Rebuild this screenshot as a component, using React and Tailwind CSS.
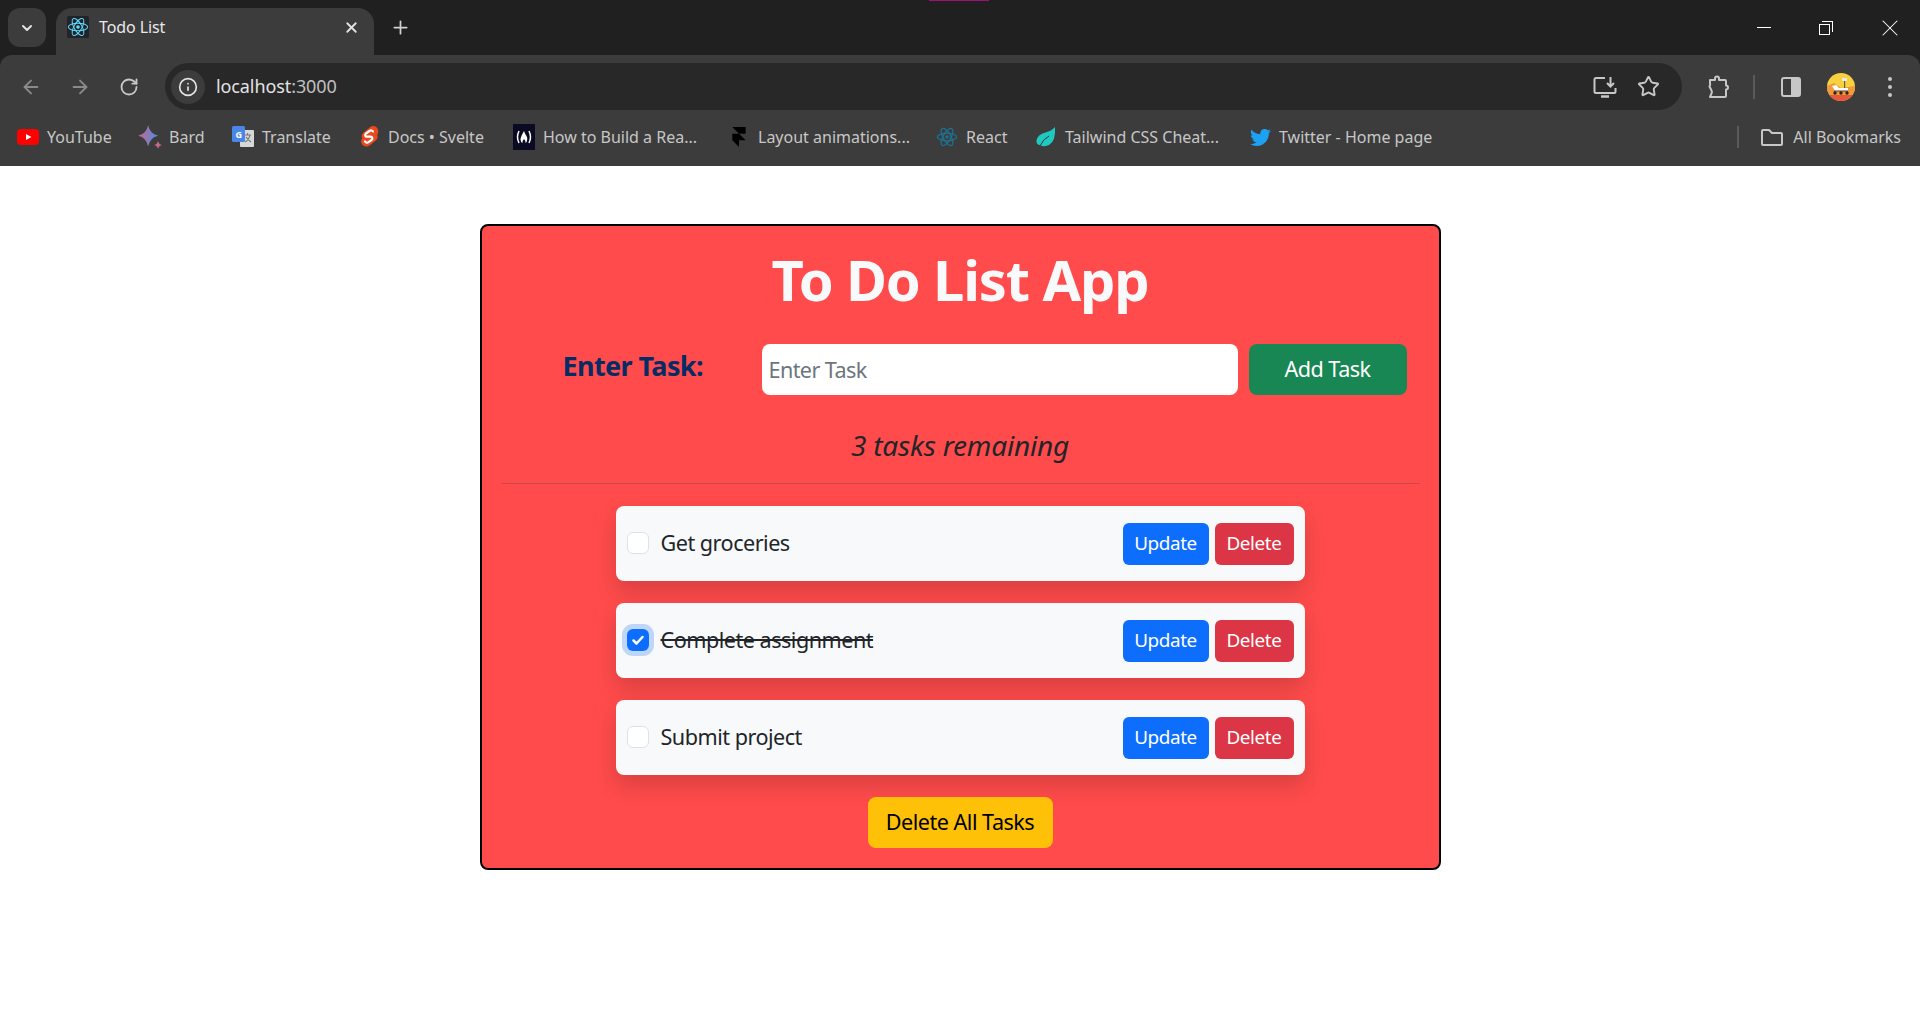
import React from "react";
import { ArrowLeft, ArrowRight, ChevronDown, Info, Plus, RotateCw, Star, X } from "lucide-react";
import { FaTwitter } from "react-icons/fa";
import { SiFramer } from "react-icons/si";

const ReactLogo = ({ size = 22, color = "#61dafb", bg = "none", sw = 1.1 }) => (
  <svg width={size} height={size} viewBox="0 0 24 24" fill="none" stroke={color} strokeWidth={sw}>
    <rect width="24" height="24" rx="2" fill={bg} stroke="none" />
    <ellipse cx="12" cy="12" rx="10.5" ry="4.2" />
    <ellipse cx="12" cy="12" rx="10.5" ry="4.2" transform="rotate(60 12 12)" />
    <ellipse cx="12" cy="12" rx="10.5" ry="4.2" transform="rotate(120 12 12)" />
    <circle cx="12" cy="12" r="2" fill={color} stroke="none" />
  </svg>
);

const YoutubeIcon = () => (
  <svg width="22" height="22" viewBox="0 0 22 22">
    <rect x="0" y="3" width="22" height="16" rx="4" fill="#f00" />
    <path d="M9 8l5.5 3L9 14z" fill="#fff" />
  </svg>
);

const BardIcon = () => (
  <svg width="26" height="26" viewBox="1 0 21 21" className="shrink-0">
    <defs>
      <linearGradient id="bard" x1="0" y1="0" x2="1" y2="0">
        <stop offset="0" stopColor="#c9678f" />
        <stop offset="1" stopColor="#4b8fe0" />
      </linearGradient>
    </defs>
    <path d="M10 1q1.5 7 8 8.500q-6.500 1.500-8 8.500q-1.500-7-8-8.500q6.500-1.500 8-8.500z" fill="url(#bard)" />
    <path d="M18 14q.6 2.400 3 3q-2.400.6-3 3q-.6-2.400-3-3q2.400-.6 3-3z" fill="#c9678f" />
  </svg>
);

const TranslateIcon = () => (
  <svg width="22" height="24" viewBox="0 0 22 24">
    <rect x="8" y="5" width="14" height="17" rx="1" fill="#d8d8d8" />
    <path d="M12 10h7M15.500 8v2M13 17q4-2 5-7M14 12q2 3 5 5" stroke="#777" strokeWidth="1.2" fill="none" />
    <rect x="0" y="1" width="13" height="16" rx="1.500" fill="#4a86e8" />
    <text x="3.500" y="12.500" fontSize="9" fontWeight="700" fill="#fff" fontFamily="Noto Sans, sans-serif">G</text>
  </svg>
);

const SvelteIcon = () => (
  <svg width="20" height="24" viewBox="0 0 20 24">
    <path d="M12 1.500c2-1 5-.5 6.500 2 1.300 2.200 1 4.600-.3 6.300.8 1.800.5 4.200-1.200 5.400l-6 5c-2.500 2-6 1.800-7.800-.6-1.500-2-1.300-4.500 0-6.300-.9-1.800-.6-4 1-5.600z" fill="#e8491f" />
    <path d="M14 6.500c-1-1.200-2.500-1.300-3.500-.5L7 8.500c-1.500 1.200-.8 3.200 1 3.200h3.500c2 0 2.600 2.200 1 3.300l-3 2.200c-1.200.8-2.700.5-3.500-.7" fill="none" stroke="#fff" strokeWidth="2.200" strokeLinecap="round" />
  </svg>
);

const FccIcon = () => (
  <svg width="22" height="26" viewBox="0 0 22 26">
    <rect width="22" height="26" fill="#0a0a23" />
    <path d="M6 7q-3 6 0 12M16 7q3 6 0 12" stroke="#fff" strokeWidth="1.500" fill="none" />
    <path d="M11 7q1 3 2.500 5t.5 5q-.5 1.500-1.500 2q.5-2-1.500-4q-2 2-1.500 4q-2-1-2-3.500t3.500-8.500z" fill="#fff" />
  </svg>
);

const LeafIcon = () => (
  <svg width="22" height="24" viewBox="0 0 22 24">
    <path d="M20 2q1 14-6 18q-5 2.500-11-.500q-2-1-1.500-4q1-6 9-8q6-1.500 9.500-5.500z" fill="#1fc8c0" />
    <path d="M5 21q3-7 9-10" stroke="#2a3a3a" strokeWidth="1" fill="none" />
  </svg>
);

const InstallIcon = () => (
  <svg width="24" height="24" viewBox="0 0 24 24" fill="none" stroke="#c7c7c7" strokeWidth="2">
    <path d="M12 3H3a1.500 1.500 0 0 0-1.500 1.500v12A1.500 1.500 0 0 0 3 18h18a1.500 1.500 0 0 0 1.500-1.500V13" />
    <path d="M8 21.500h8" strokeWidth="2.500" />
    <path d="M17.500 2v9M14 8l3.500 3.500L21 8" />
  </svg>
);

const PuzzleIcon = () => (
  <svg width="24" height="24" viewBox="0 0 24 24" fill="none" stroke="#c7c7c7" strokeWidth="2" strokeLinejoin="round">
    <path d="M4 5h5V3.500a2 2 0 0 1 4 0V5h6a1 1 0 0 1 1 1v4.500a2 2 0 0 1 0 4V21a1 1 0 0 1-1 1H4l1.500-3.500a3 3 0 0 0 0-3L3.500 11.500a3 3 0 0 0 .5-3z" />
  </svg>
);

const SidePanelIcon = () => (
  <svg width="20" height="22" viewBox="0 0 20 22">
    <rect x="1" y="2" width="18" height="18" rx="2" fill="none" stroke="#c7c7c7" strokeWidth="2" />
    <rect x="10" y="2" width="9" height="18" fill="#c7c7c7" />
  </svg>
);

const Avatar = () => (
  <svg width="28" height="28" viewBox="0 0 28 28">
    <defs>
      <clipPath id="av"><circle cx="14" cy="14" r="14" /></clipPath>
    </defs>
    <g clipPath="url(#av)">
      <rect width="28" height="28" fill="#f7d23e" />
      <path d="M0 13l7-3 7 5 14-2v9H0z" fill="#ef9a3c" />
      <rect y="22" width="28" height="6" fill="#e8563c" />
      <path d="M5 13l4-1 3 3h9v3H8z" fill="#fff" />
      <rect x="15" y="5" width="5" height="3" fill="#e8e8e8" />
      <rect x="17" y="8" width="1.200" height="7" fill="#6a5a48" />
      <path d="M7 18h14" stroke="#5a3a20" strokeWidth="1" />
      <circle cx="8" cy="20" r="1.700" fill="#2f241c" />
      <circle cx="14" cy="20" r="1.700" fill="#2f241c" />
      <circle cx="20" cy="20" r="1.700" fill="#2f241c" />
    </g>
  </svg>
);

const bookmarks = [
  { label: "YouTube", icon: <YoutubeIcon />, cls: "w-[122px]" },
  { label: "Bard", icon: <BardIcon />, cls: "w-[93px]" },
  { label: "Translate", icon: <TranslateIcon />, cls: "w-[126px]" },
  { label: "Docs • Svelte", icon: <SvelteIcon />, cls: "w-[155px]" },
  { label: "How to Build a Rea...", icon: <FccIcon />, cls: "w-[215px]" },
  { label: "Layout animations...", icon: <SiFramer size={20} color="#000" />, cls: "w-[208px]" },
  { label: "React", icon: <ReactLogo color="#1f6f8f" sw={1.5} />, cls: "w-[99px]" },
  { label: "Tailwind CSS Cheat...", icon: <LeafIcon />, cls: "w-[214px]" },
  { label: "Twitter - Home page", icon: <FaTwitter size={21} color="#1da1f2" />, cls: "" },
];

const tasks = [
  { text: "Get groceries", done: false },
  { text: "Complete assignment", done: true },
  { text: "Submit project", done: false },
];

const BrowserChrome = () => (
  <div className="bg-[#202020] font-['Noto_Sans',sans-serif]">
    {/* tab strip */}
    <div className="relative flex h-[55px] items-end pl-[8px]">
      <div className="absolute left-[929px] top-0 h-[1px] w-[60px] bg-[#a0107a]" />
      <div className="mb-[8px] flex h-[39px] w-[38px] items-center justify-center rounded-xl bg-[#3c3c3c]">
        <ChevronDown size={16} strokeWidth={3} color="#e3e3e3" />
      </div>
      <div className="ml-[10px] flex h-[47px] w-[318px] items-center rounded-t-2xl bg-[#3c3c3c] pb-[9px] pl-[11px] pr-[14px]">
        <ReactLogo size={22} bg="#20232a" />
        <span className="ml-[10px] text-[16px] tracking-[-0.1px] text-[#e8e8e8]">Todo List</span>
        <X size={17} strokeWidth={2.5} color="#e3e3e3" className="ml-auto" />
      </div>
      <Plus size={21} strokeWidth={2} color="#d0d0d0" className="mb-[17px] ml-[16px]" />
      <div className="ml-auto flex h-[55px] items-center pr-[16px] text-white">
        <div className="h-[1px] w-[14px] bg-white" />
        <div className="relative ml-[48px] h-[14px] w-[14px]">
          <div className="absolute bottom-0 left-0 h-[11px] w-[11px] border border-white bg-[#202020]" />
          <div className="absolute right-0 top-0 h-[3px] w-[11px] border-r border-t border-white" />
          <div className="absolute right-0 top-0 h-[11px] w-[3px] border-r border-white" />
        </div>
        <X size={28} strokeWidth={0.9} color="#fff" className="ml-[43px]" />
      </div>
    </div>

    {/* toolbar */}
    <div className="flex h-[55px] items-start rounded-t-xl bg-[#3c3c3c] pt-[8px]">
      <div className="flex h-[47px] w-[165px] items-center pl-[20px]">
        <ArrowLeft size={22} color="#8b8b8b" strokeWidth={2} />
        <ArrowRight size={22} color="#8b8b8b" strokeWidth={2} className="ml-[27px]" />
        <RotateCw size={20} color="#c7c7c7" strokeWidth={2.2} className="ml-[28px]" />
      </div>
      <div className="flex h-[47px] w-[1517px] items-center rounded-full bg-[#282828] pl-[6px] pr-[22px]">
        <div className="flex h-[34px] w-[34px] items-center justify-center rounded-full bg-[#3c3c3c]">
          <Info size={20} color="#e3e3e3" strokeWidth={2} />
        </div>
        <span className="ml-[11px] text-[18px] tracking-[-0.1px] text-[#e3e3e3]">
          localhost<span className="text-[#c0c0c0]">:3000</span>
        </span>
        <div className="ml-auto flex items-center gap-[20px]">
          <InstallIcon />
          <Star size={23} color="#c7c7c7" strokeWidth={2} />
        </div>
      </div>
      <div className="flex h-[47px] flex-1 items-center pl-[24px]">
        <PuzzleIcon />
        <div className="ml-[23px] h-[24px] w-[2px] bg-[#5a5a5a]" />
        <div className="ml-[26px]"><SidePanelIcon /></div>
        <div className="ml-[26px]"><Avatar /></div>
        <div className="ml-[33px] flex flex-col gap-[4px]">
          <div className="h-[4px] w-[4px] rounded-full bg-[#c7c7c7]" />
          <div className="h-[4px] w-[4px] rounded-full bg-[#c7c7c7]" />
          <div className="h-[4px] w-[4px] rounded-full bg-[#c7c7c7]" />
        </div>
      </div>
    </div>

    {/* bookmarks bar */}
    <div className="flex h-[56px] items-center bg-[#3c3c3c] pb-[2px] pl-[17px] text-[16px] tracking-[0px] text-[#c7c7c7]">
      {bookmarks.map((b) => (
        <div key={b.label} className={`flex shrink-0 items-center ${b.cls}`}>
          <span className="flex w-[22px] justify-center">{b.icon}</span>
          <span className="ml-[8px] whitespace-nowrap">{b.label}</span>
        </div>
      ))}
      <div className="ml-auto flex items-center pr-[19px]">
        <div className="h-[22px] w-[2px] bg-[#5a5a5a]" />
        <svg width="24" height="24" viewBox="0 0 24 24" fill="none" stroke="#c7c7c7" strokeWidth="2" className="ml-[21px]">
          <path d="M2 6a1 1 0 0 1 1-1h6l3 3h9a1 1 0 0 1 1 1v10a1 1 0 0 1-1 1H3a1 1 0 0 1-1-1z" />
        </svg>
        <span className="ml-[9px] whitespace-nowrap">All Bookmarks</span>
      </div>
    </div>
  </div>
);

const TaskRow = ({ text, done }) => (
  <div className="flex h-[75px] w-[689px] items-center rounded-lg bg-[#f8f9fa] pl-[11px] pr-[11px] shadow-[0_11px_22px_rgba(0,0,0,0.15)]">
    {done ? (
      <span className="-mt-[2px] flex h-[22px] w-[22px] items-center justify-center rounded-[6px] bg-[#0d6efd] shadow-[0_0_0_5px_rgba(13,110,253,0.25)]">
        <svg width="14" height="14" viewBox="0 0 14 14" fill="none" stroke="#fff" strokeWidth="2.500" strokeLinecap="round" strokeLinejoin="round">
          <path d="M2.500 7.500l3 3 6-6.500" />
        </svg>
      </span>
    ) : (
      <span className="-mt-[2px] h-[22px] w-[22px] rounded-[6px] border border-[#dee2e6] bg-white" />
    )}
    <span className={`ml-[12px] text-[21.6px] tracking-[-0.5px] text-[#212529] ${done ? "line-through" : ""}`}>{text}</span>
    <button className="ml-auto h-[42px] w-[86px] rounded-[6px] bg-[#0d6efd] text-[18.9px] tracking-[-0.4px] text-white">Update</button>
    <button className="ml-[6px] h-[42px] w-[79px] rounded-[6px] bg-[#dc3545] text-[18.9px] tracking-[-0.4px] text-white">Delete</button>
  </div>
);

export default function App() {
  return (
    <div className="min-h-[1030px] bg-white">
      <BrowserChrome />
      <div className="mx-auto mt-[58px] h-[646px] w-[961px] rounded-lg border-2 border-black bg-[#ff4b4b] px-[19px] font-['Noto_Sans',sans-serif]">
        <h1 className="pt-[21px] text-center text-[56px] font-bold leading-[64px] tracking-[-1.15px] text-[#f8f9fa]">To Do List App</h1>

        <div className="mt-[33px] flex h-[51px] items-start">
          <label className="ml-[62px] mt-[2px] w-[199px] text-[27px] font-bold leading-[40px] tracking-[-0.6px] text-[#052c65]">Enter Task:</label>
          <input
            placeholder="Enter Task"
            className="h-[51px] w-[476px] rounded-lg bg-white px-[7px] text-[21.6px] tracking-[-0.6px] placeholder:text-[#6c757d]"
          />
          <button className="ml-[11px] h-[51px] w-[158px] rounded-lg bg-[#198754] text-[21.6px] tracking-[-0.5px] text-white">Add Task</button>
        </div>

        <p className="mt-[32px] text-center text-[28px] italic leading-[36px] tracking-[-0.18px] text-[#212529]">3 tasks remaining</p>
        <div className="mt-[20px] h-[1px] bg-[#c94848]" />

        <div className="mt-[22px] flex flex-col items-center gap-[22px]">
          {tasks.map((t) => (
            <TaskRow key={t.text} text={t.text} done={t.done} />
          ))}
        </div>

        <div className="mt-[22px] flex justify-center">
          <button className="h-[51px] w-[185px] rounded-lg bg-[#ffc107] text-[21.6px] tracking-[-0.5px] text-black">Delete All Tasks</button>
        </div>
      </div>
    </div>
  );
}
